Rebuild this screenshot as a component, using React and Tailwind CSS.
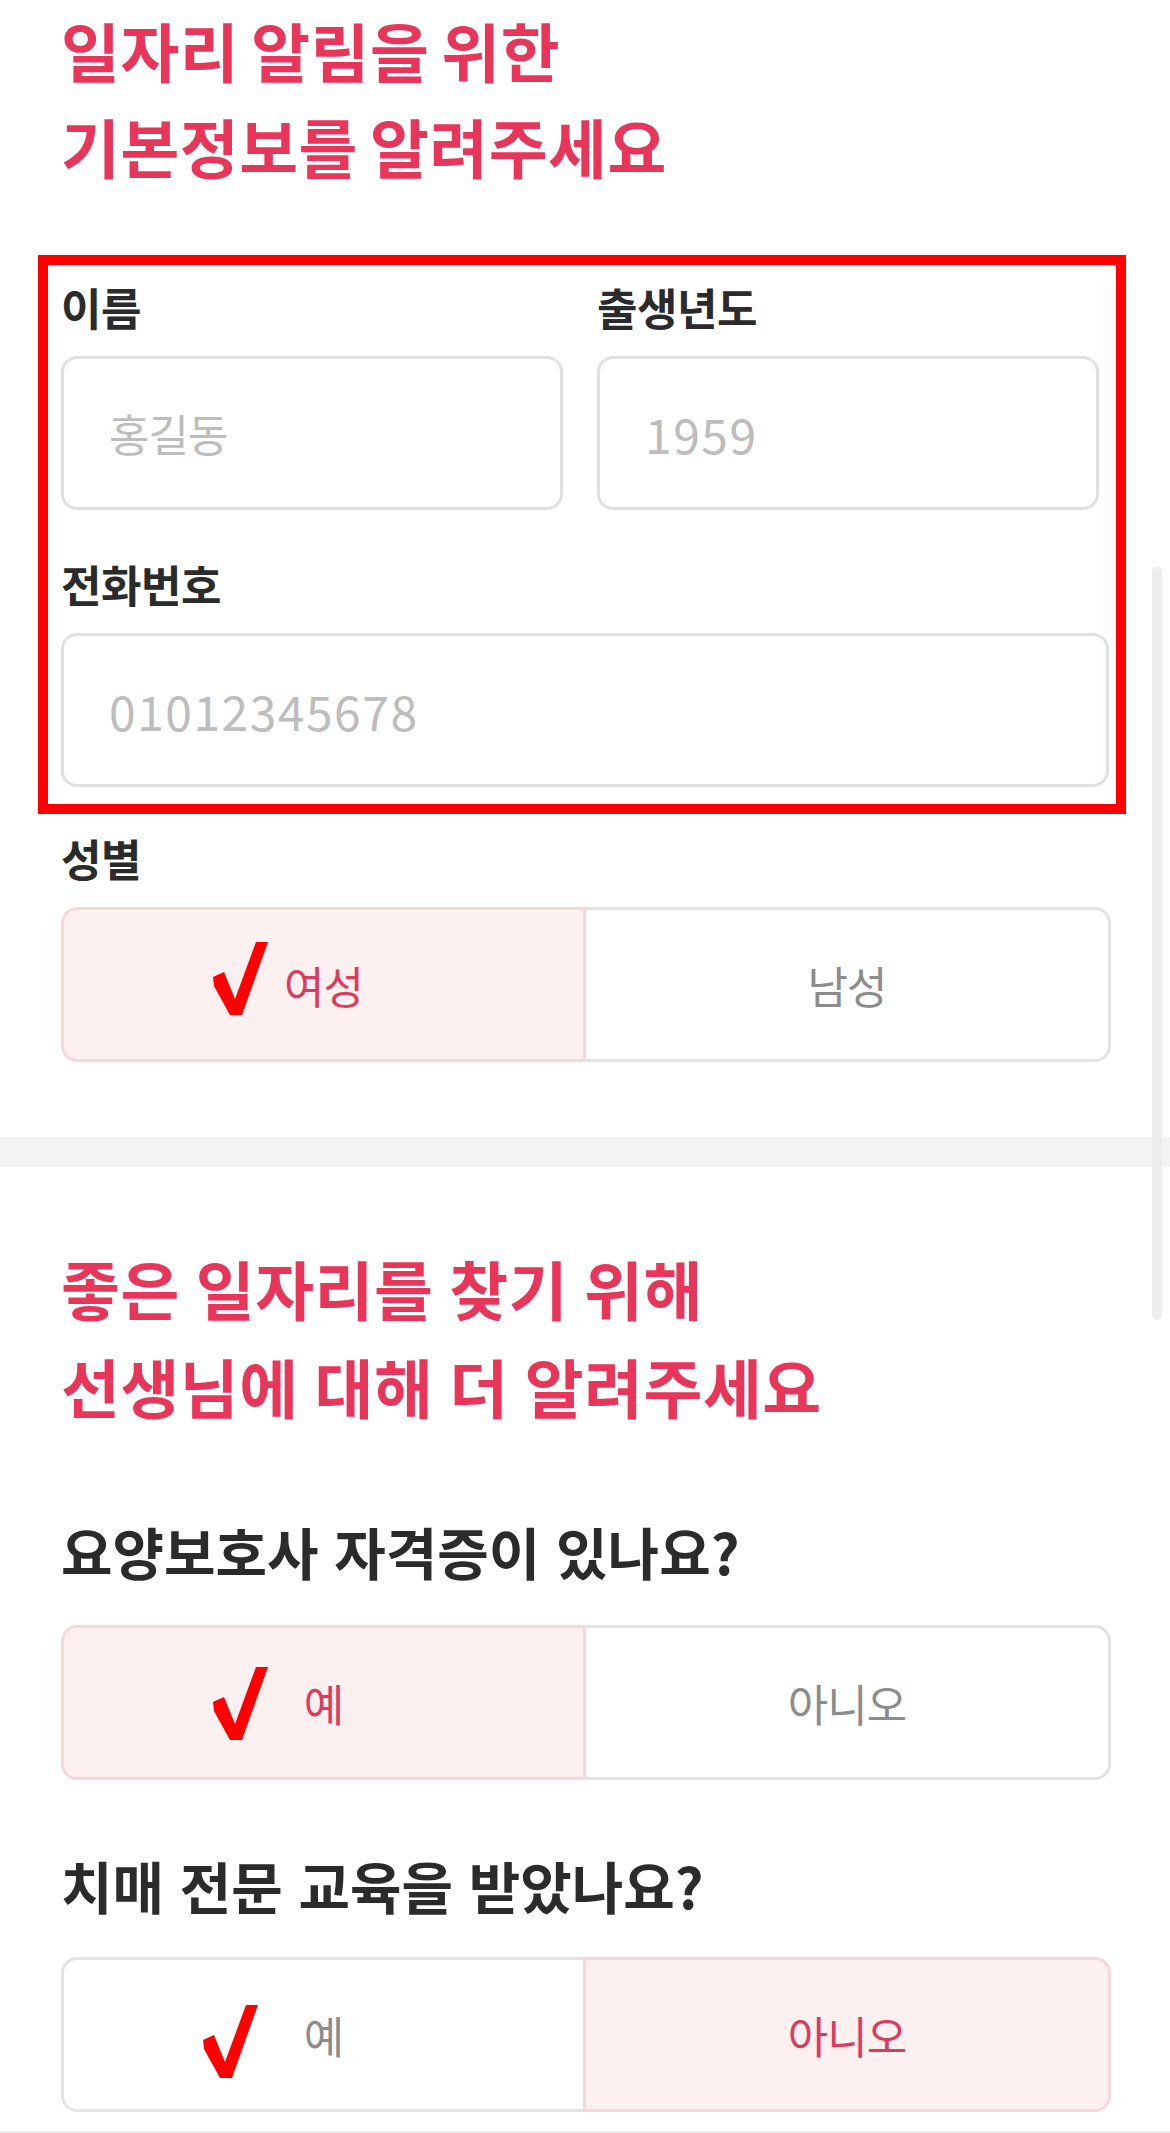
import { useState } from "react";

const font = "font-['Noto_Sans_CJK_KR','Noto_Sans',sans-serif]";

function CheckMark({ className }) {
  return (
    <svg viewBox="0 0 60 76" className={`pointer-events-none absolute z-20 h-[76px] w-[60px] ${className}`}>
      <polygon points="3,37 14,32 25,59 46,2 58,2 32,75 20,75 4,46" fill="#ff0000" />
    </svg>
  );
}

function Segment({ options, value, onChange, checkClass }) {
  return (
    <div className="relative grid h-[155px] grid-cols-2">
      {options.map((opt, i) => {
        const on = value === opt;
        return (
          <button
            key={opt}
            type="button"
            onClick={() => onChange(opt)}
            className={`relative flex items-center justify-center border-[3px] text-[44px] tracking-[-1px] ${
              i === 0 ? "rounded-l-[16px]" : "-ml-[3px] rounded-r-[16px]"
            } ${
              on
                ? "z-10 border-[#f6d7dc] bg-[#fdf0f1] text-[#dc3b5f]"
                : "border-[#e3e3e3] bg-white text-[#8c8c8c]"
            }`}
          >
            {opt}
          </button>
        );
      })}
      <CheckMark className={checkClass} />
    </div>
  );
}

function Label({ children }) {
  return (
    <label className="mb-[19px] block text-[44px] font-bold leading-[60px] tracking-[-0.5px] text-[#2b2b2b]">
      {children}
    </label>
  );
}

function Field({ placeholder, numeric }) {
  return (
    <input
      type="text"
      placeholder={placeholder}
      className={`h-[154px] w-full rounded-[16px] border-[3px] border-[#e0e0e0] bg-white pl-[45px] text-[#2b2b2b] outline-none placeholder:text-[#bdbdbd] ${
        numeric ? "text-[48px] tracking-[1.5px]" : "text-[44px] tracking-[-1px]"
      }`}
    />
  );
}

export default function App() {
  const [gender, setGender] = useState("여성");
  const [license, setLicense] = useState("예");
  const [dementia, setDementia] = useState("아니오");

  return (
    <div className={`relative min-h-[2133px] w-full overflow-hidden bg-white ${font}`}>
      {/* 기본정보 */}
      <section className="pl-[61px] pr-[59px] pt-[1px]">
        <h1 className="text-[64px] font-bold leading-[96px] tracking-[0.5px] text-[#e8365b] [word-spacing:-3px]">
          일자리 알림을 위한
          <br />
          기본정보를 알려주세요
        </h1>

        <div className="relative mt-[84px]">
          <div className="pointer-events-none absolute -bottom-[27px] -left-[23px] -right-[15px] -top-[22px] z-20 border-[10px] border-[#ff0000]" />

          <div className="grid grid-cols-[502px_502px] gap-x-[34px]">
            <div>
              <Label>이름</Label>
              <Field placeholder="홍길동" />
            </div>
            <div>
              <Label>출생년도</Label>
              <Field placeholder="1959" numeric />
            </div>
          </div>

          <div className="mr-[2px] mt-[44px]">
            <Label>전화번호</Label>
            <Field placeholder="01012345678" numeric />
          </div>
        </div>

        <div className="mt-[41px]">
          <Label>성별</Label>
          <Segment options={["여성", "남성"]} value={gender} onChange={setGender} checkClass="left-[149px] top-[33px]" />
        </div>
      </section>

      <div className="mt-[75px] h-[30px] bg-[#f4f4f4]" />

      {/* 추가정보 */}
      <section className="pl-[61px] pr-[59px]">
        <h2 className="mt-[71px] text-[64px] font-bold leading-[98px] tracking-[0.5px] text-[#e8365b] [word-spacing:1px]">
          좋은 일자리를 찾기 위해
          <br />
          선생님에 대해 더 알려주세요
        </h2>

        <p className="mb-[39px] mt-[82px] text-[56px] font-bold leading-[70px] tracking-[0px] text-[#2b2b2b] [word-spacing:3px]">
          요양보호사 자격증이 있나요?
        </p>
        <Segment options={["예", "아니오"]} value={license} onChange={setLicense} checkClass="left-[149px] top-[40px]" />

        <p className="mb-[37px] mt-[70px] text-[56px] font-bold leading-[70px] tracking-[0px] text-[#2b2b2b] [word-spacing:3px]">
          치매 전문 교육을 받았나요?
        </p>
        <Segment options={["예", "아니오"]} value={dementia} onChange={setDementia} checkClass="left-[139px] top-[46px]" />
      </section>

      <div className="mt-[19px] h-[3px] bg-[#efefef]" />

      {/* scroll indicator */}
      <div className="pointer-events-none absolute right-[8px] top-[567px] h-[753px] w-[10px] rounded-full bg-[#ededed]" />
    </div>
  );
}
